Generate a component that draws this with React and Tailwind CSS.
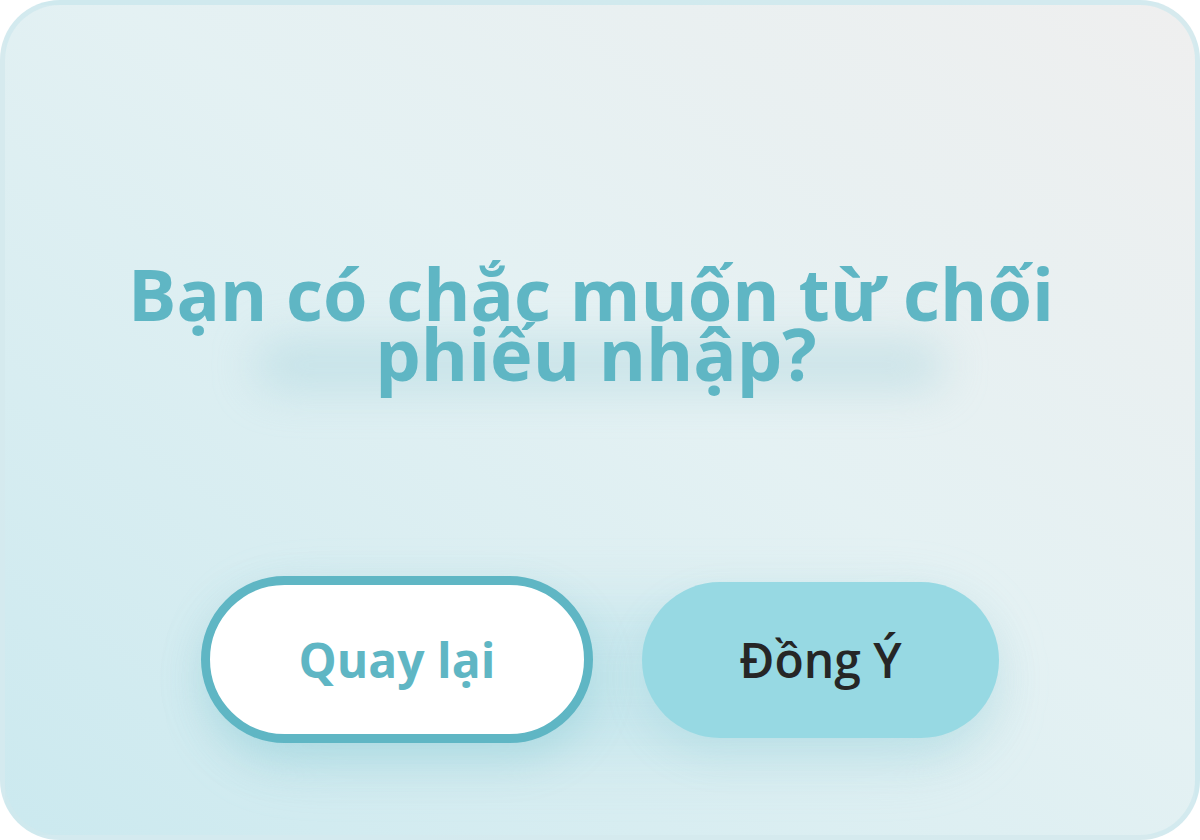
export default function App() {
  return (
    <div className="w-[1200px] h-[840px] bg-white" style={{ fontFamily: '"Open Sans", sans-serif' }}>
      <div className="relative w-full h-full rounded-[60px] border-[5px] border-[#cfe8ee]/80 bg-[linear-gradient(to_top_right,#cbe9ef,#e4f1f3_55%,#efefef)] overflow-hidden flex flex-col items-center">
        <div className="absolute left-[250px] top-[335px] w-[690px] h-[50px] rounded-full bg-[#9fd0d9]/40 blur-[22px]" />
        <div className="absolute left-[220px] top-[600px] w-[760px] h-[150px] rounded-full bg-[#a9dde6]/40 blur-[30px]" />
        <h1 className="relative mt-[258px] text-center text-[72px] leading-[60px] font-bold text-[#5fb6c4]">
          <span className="block pr-[18px]">Bạn có chắc muốn từ chối</span>
          <span className="block pr-[8px]">phiếu nhập?</span>
        </h1>
        <div className="relative mt-[193px] flex items-center gap-[49px]">
          <button className="w-[392px] h-[167px] rounded-full border-[9px] border-[#5fb6c4] bg-white text-[48px] font-bold text-[#5fb6c4] shadow-[0_18px_40px_rgba(95,182,196,0.25)]">
            Quay lại
          </button>
          <button className="w-[357px] h-[156px] rounded-full bg-[#97d9e3] text-[48px] font-semibold text-[#262626] shadow-[0_18px_40px_rgba(95,182,196,0.15)]">
            Đồng Ý
          </button>
        </div>
      </div>
    </div>
  );
}
